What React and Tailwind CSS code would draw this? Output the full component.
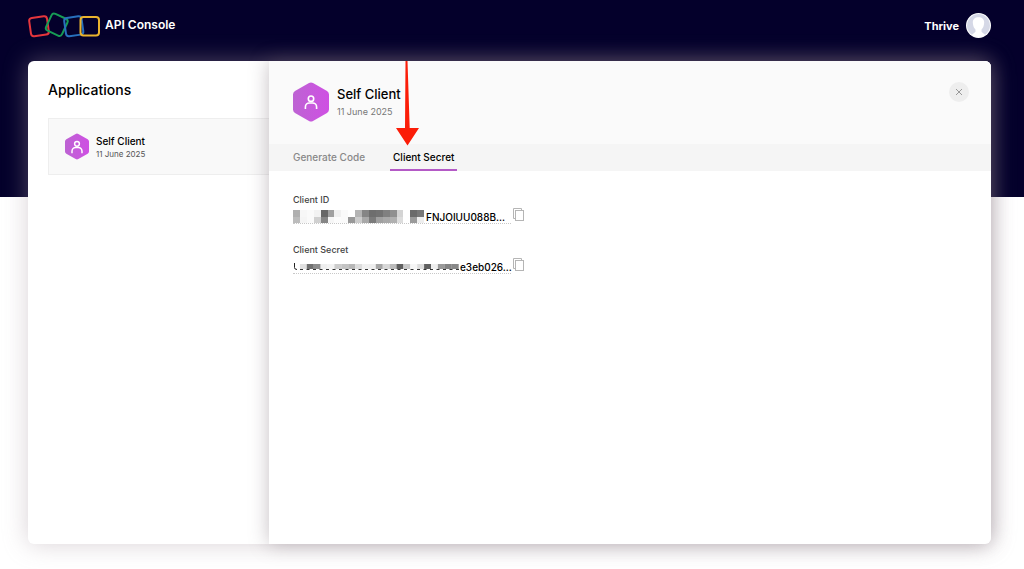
import { useState } from "react";

const CLIENT_ID_MASK = [
  ["#b0b0b0", "#f7f7f7", "#fafafa", "#f2f2f2", "#666666", "#a0a0a0", "#f0f0f0", "#fafafa", "#ffffff", "#b4b4b4", "#858585", "#6e6e6e", "#727272", "#808080", "#909090", "#d4d4d4", "#ffffff", "#6a6a6a", "#777777"],
  ["#bcbcbc", "#f5f5f5", "#fafafa", "#d0d0d0", "#858585", "#f6f6f6", "#fcfcfc", "#fafafa", "#999999", "#cccccc", "#a8a8a8", "#7b7b7b", "#a0a0a0", "#a8a8a8", "#b0b0b0", "#dddddd", "#ffffff", "#9a9a9a", "#eeeeee"],
];

const SECRET_MASK = ["#ffffff", "#e0e0e0", "#707070", "#8c8c8c", "#eeeeee", "#f2f2f2", "#cccccc", "#c4c4c4", "#b8b8b8", "#dddddd", "#f0f0f0", "#eeeeee", "#a6a6a6", "#d8d8d8", "#bbbbbb", "#606060", "#c8c8c8", "#f6f6f6", "#dddddd", "#606060", "#eeeeee", "#999999", "#858585", "#888888"];

function Logo() {
  return (
    <svg width="73" height="28" viewBox="0 0 73 28" fill="none" strokeWidth="2" aria-hidden="true">
      <rect x="2" y="5" width="18" height="18.5" rx="3" stroke="#e5363d" transform="rotate(-8 11 14.2)" />
      <rect x="20" y="3.5" width="17.5" height="18.5" rx="3" stroke="#179b55" transform="rotate(25 28.8 12.8)" />
      <rect x="37" y="5" width="17.5" height="18.5" rx="3" stroke="#2870bd" transform="rotate(-8 45.8 14.2)" />
      <rect x="52.500" y="5" width="18.500" height="18.5" rx="3" stroke="#eab32e" />
    </svg>
  );
}

function HexUser({ className, id, large }) {
  return (
    <svg className={className} viewBox="0 0 36 40" fill="none" aria-hidden="true">
      <defs>
        <linearGradient id={id} x1="0" y1="0" x2="1" y2="0">
          <stop stopColor="#bd63d3" />
          <stop offset="1" stopColor="#cf50e3" />
        </linearGradient>
      </defs>
      <path d="M16 1.1a4 4 0 0 1 4 0L34 9a4 4 0 0 1 2 3.500V27.500a4 4 0 0 1-2 3.500L20 38.900a4 4 0 0 1-4 0L2 31a4 4 0 0 1-2-3.500V12.500A4 4 0 0 1 2 9Z" fill={`url(#${id})`} />
      {large ? (
        <g stroke="#fff" strokeWidth="1.600">
          <circle cx="18" cy="16.700" r="2.700" />
          <path d="M12.400 27v-2a4 4 0 0 1 4-4h3.200a4 4 0 0 1 4 4v2" />
        </g>
      ) : (
        <g stroke="#fff" strokeWidth="2.200">
          <circle cx="18" cy="16" r="3.600" />
          <path d="M10.500 30v-3a5.500 5.500 0 0 1 5.500-5.500h4a5.500 5.500 0 0 1 5.500 5.500v3" />
        </g>
      )}
    </svg>
  );
}

function Avatar() {
  return (
    <svg className="size-[25px]" viewBox="0 0 24 24" aria-hidden="true">
      <circle cx="12" cy="12" r="12" fill="#fff" />
      <circle cx="12" cy="12" r="11" fill="#d5d8e6" />
      <path d="M12 4c-4 0-5.800 2.400-5.400 5.800.3 2.600 1 4.700 2.500 6v2.300L5.500 21a11 11 0 0 0 13 0l-3.600-2.900v-2.300c1.500-1.300 2.200-3.400 2.500-6C17.800 6.400 16 4 12 4Z" fill="#fff" />
    </svg>
  );
}

function CopyButton({ label }) {
  return (
    <button type="button" aria-label={label} className="ml-0.5 shrink-0">
      <svg className="h-3.5 w-3" viewBox="0 0 12 14" fill="none" stroke="#b5b5b5" aria-hidden="true">
        <path d="M2.500 10.500h-2v-10h8v2" />
        <rect x="2.500" y="2.500" width="8" height="10" />
      </svg>
    </button>
  );
}

function IdMask() {
  return (
    <svg className="h-[13px] w-[133px] shrink-0" viewBox="0 0 133 13" shapeRendering="crispEdges" aria-hidden="true">
      {CLIENT_ID_MASK.map((row, y) =>
        row.map((fill, x) => <rect key={`${x}-${y}`} x={x * 6.9} y={y * 6.5} width="7" height="6.500" fill={fill} />)
      )}
    </svg>
  );
}

function SecretMask() {
  return (
    <svg className="h-[13px] w-[167px] shrink-0" viewBox="0 0 167 13" aria-hidden="true">
      {SECRET_MASK.map((fill, x) => <rect key={x} x={x * 6.9} y="4" width="7" height="5" fill={fill} />)}
      <path d="M1.500 3v4.500q0 2 2.500 2" fill="none" stroke="#222" />
      <path d="M7 9.500h160" stroke="#333" strokeDasharray="3 3.500" />
    </svg>
  );
}

function SecretField({ label, mask, value }) {
  return (
    <div>
      <dt className="text-[9px] leading-3 font-medium text-[#444]">{label}</dt>
      <dd className="mt-0.5 flex items-start">
        <span className="flex h-4 w-[218px] items-center border-b border-dotted border-[#c8c8c8] pt-0.5 text-[10px] leading-3 text-black">
          {mask}
          <span className="font-medium whitespace-nowrap">{value}</span>
        </span>
        <CopyButton label={`Copy ${label}`} />
      </dd>
    </div>
  );
}

export default function App() {
  const [tab, setTab] = useState("secret");
  return (
    <div className="flex min-h-screen flex-col bg-white bg-[linear-gradient(#04002b_197px,transparent_197px)] pr-[33px] pb-[25px] pl-7 font-[Inter,sans-serif] text-black">
      <header className="flex h-[61px] shrink-0 items-start justify-between pt-3 text-white">
        <a href="#home" className="flex items-start gap-1">
          <Logo />
          <span className="pt-[5px] text-[12px] leading-4 font-semibold">API Console</span>
        </a>
        <button type="button" className="flex items-center gap-[7px] pt-px text-[11px] leading-4 font-bold">
          Thrive
          <Avatar />
        </button>
      </header>

      <main className="flex flex-1 rounded-md bg-white shadow-[0_0_24px_rgba(170,155,165,0.45)]">
        <aside className="w-[241px] shrink-0 pt-[21px] pl-5">
          <h1 className="text-[14px] leading-4 font-medium">Applications</h1>
          <button type="button" className="mt-5 flex h-[57px] w-full items-center gap-[7px] border border-r-0 border-[#eeeeee] bg-[#f9f9f9] pl-4 text-left">
            <HexUser className="h-[27px] w-6" id="hex-list" />
            <span>
              <span className="block text-[10px] leading-[14px] font-medium">Self Client</span>
              <span className="block text-[8px] leading-3 text-[#555]">11 June 2025</span>
            </span>
          </button>
        </aside>

        <section className="relative min-w-0 flex-1 rounded-r-md bg-white shadow-[0_0_20px_rgba(110,95,105,0.4)]">
          <div className="flex h-[83px] items-start justify-between rounded-tr-md bg-[#fafafa] pt-[21px] pr-[22px] pl-6">
            <div className="flex items-center gap-2">
              <HexUser className="h-10 w-9" id="hex-detail" large />
              <div>
                <h2 className="text-[13px] leading-5 font-medium">Self Client</h2>
                <p className="text-[9px] leading-4 text-[#777]">11 June 2025</p>
              </div>
            </div>
            <button type="button" aria-label="Close" className="flex size-5 items-center justify-center rounded-full bg-[#eeeeee]">
              <svg className="size-2" viewBox="0 0 8 8" stroke="#999" aria-hidden="true">
                <path d="m1 1 6 6M7 1 1 7" />
              </svg>
            </button>
          </div>

          <div role="tablist" className="flex h-[27px] gap-[22px] bg-[#f5f5f5] pl-[21px] text-[10px]">
            <button type="button" role="tab" aria-selected={tab === "code"} onClick={() => setTab("code")} className="border-b-2 border-transparent px-[3px] pt-0.5 font-medium text-[#888] aria-selected:border-[#b45ac6] aria-selected:text-black">
              Generate Code
            </button>
            <button type="button" role="tab" aria-selected={tab === "secret"} onClick={() => setTab("secret")} className="border-b-2 border-transparent px-[3px] pt-0.5 font-medium text-[#888] aria-selected:border-[#b45ac6] aria-selected:text-black">
              Client Secret
            </button>
          </div>

          <dl className="flex flex-col gap-5 px-6 pt-[23px]">
            <SecretField label="Client ID" mask={<IdMask />} value="FNJOIUU088B..." />
            <SecretField label="Client Secret" mask={<SecretMask />} value="e3eb026..." />
          </dl>

          <svg className="pointer-events-none absolute top-0 left-[127px]" width="24" height="85" viewBox="0 0 24 85" aria-hidden="true">
            <path d="M9.500 0h2l2.200 67H23L11.500 84.500 0 67H9Z" fill="#fb1d08" />
          </svg>
        </section>
      </main>
    </div>
  );
}
